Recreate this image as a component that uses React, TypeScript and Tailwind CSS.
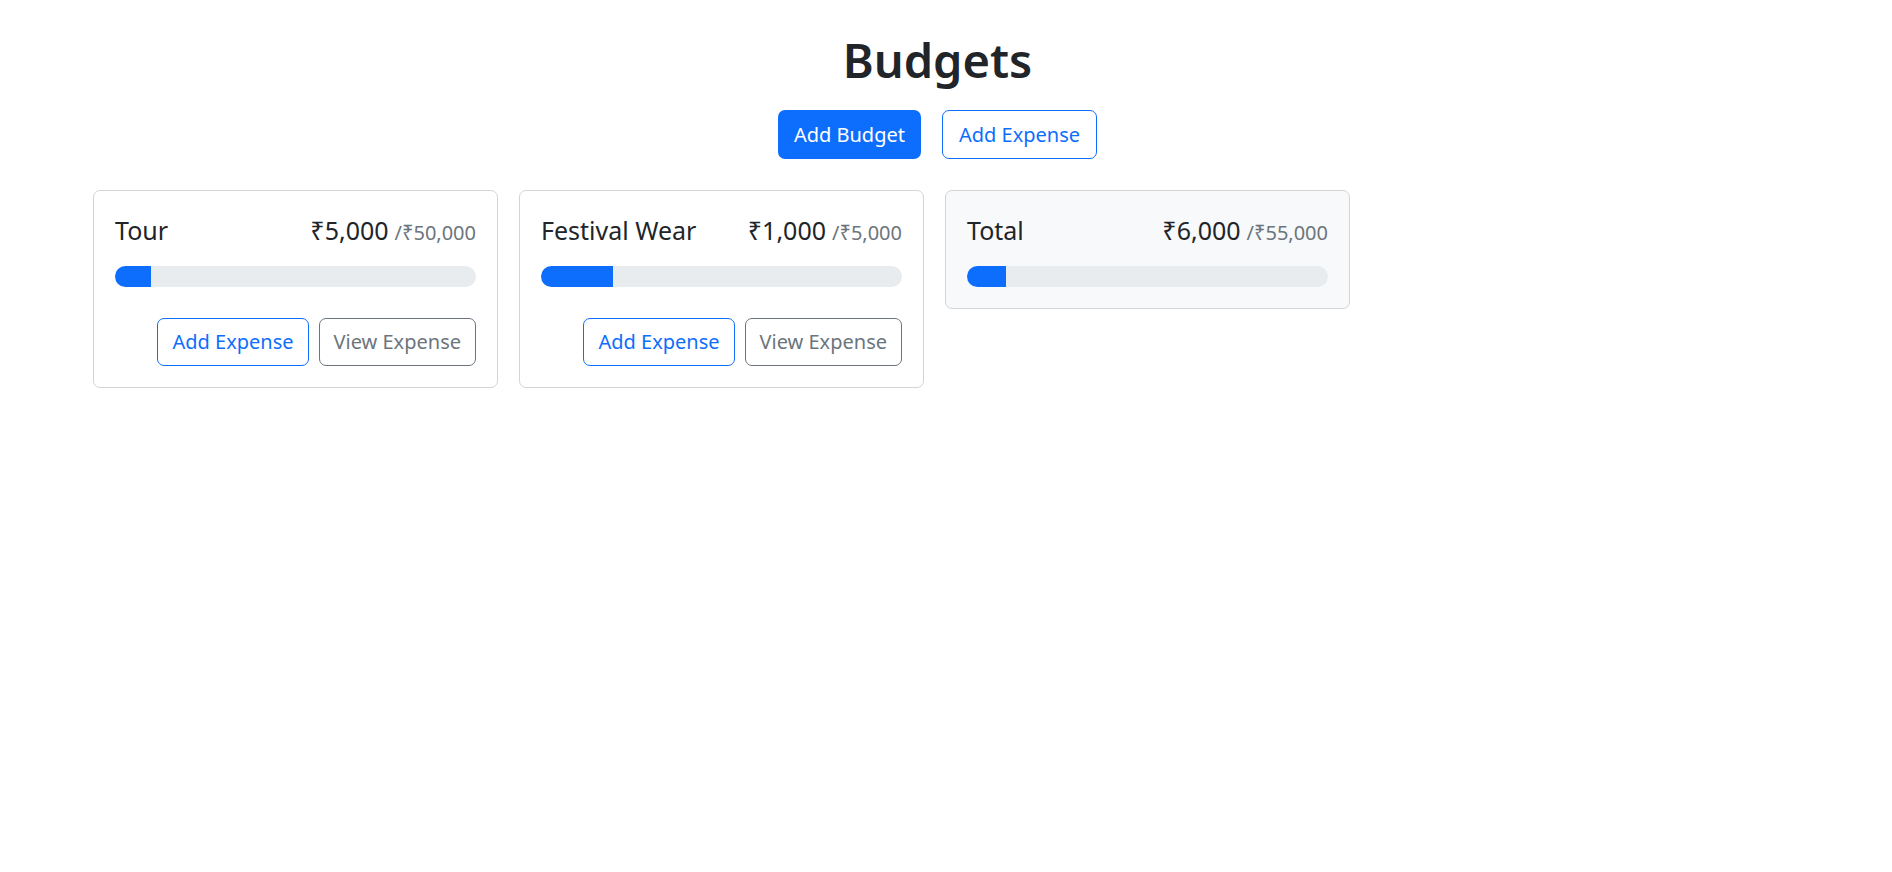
import React from 'react';

type Budget = { id: string; name: string; spent: number; max: number };

const budgets: Budget[] = [
  { id: 'tour', name: 'Tour', spent: 5000, max: 50000 },
  { id: 'fest', name: 'Festival Wear', spent: 1000, max: 5000 },
];

const fmt = (n: number) => '₹' + n.toLocaleString('en-IN');

const BudgetCard: React.FC<{ name: string; spent: number; max: number; gray?: boolean; hideButtons?: boolean }> = ({
  name,
  spent,
  max,
  gray,
  hideButtons,
}) => {
  const pct = Math.min(100, (spent / max) * 100);
  return (
    <div
      className={`rounded-[7px] border border-[#d3d4d5] px-[21px] pt-[21px] pb-[21px] ${gray ? 'bg-[#f8f9fa]' : 'bg-white'}`}
    >
      <div className="flex items-baseline justify-between mb-[15px] text-[25px] leading-[37px] text-[#212529]">
        <div>{name}</div>
        <div className="flex items-baseline">
          {fmt(spent)}
          <span className="ml-[6px] text-[20px] text-[#6c757d]">/{fmt(max)}</span>
        </div>
      </div>
      <div className="h-[21px] w-full rounded-full bg-[#e9ecef] overflow-hidden flex">
        <div className="h-full bg-[#0d6efd]" style={{ width: `${pct}%` }} />
      </div>
      {!hideButtons && (
        <div className="mt-[31px] flex justify-end gap-[10px]">
          <button className="h-[48px] px-[14px] rounded-[7px] border border-[#0d6efd] text-[#0d6efd] text-[20px] bg-white">
            Add Expense
          </button>
          <button className="h-[48px] px-[14px] rounded-[7px] border border-[#6c757d] text-[#6c757d] text-[20px] bg-white">
            View Expense
          </button>
        </div>
      )}
    </div>
  );
};

export default function App() {
  const totalSpent = budgets.reduce((s, b) => s + b.spent, 0);
  const totalMax = budgets.reduce((s, b) => s + b.max, 0);
  return (
    <div className="min-h-screen bg-white pt-[30px] font-['Noto_Sans',sans-serif] text-[#212529]">
      <div className="w-[1875px]">
        <h1 className="text-center text-[47px] leading-[60px] font-semibold">Budgets</h1>
        <div className="mt-[20px] flex justify-center gap-[21px]">
          <button className="h-[49px] px-[16px] rounded-[7px] bg-[#0d6efd] text-white text-[20px]">Add Budget</button>
          <button className="h-[49px] px-[16px] rounded-[7px] border border-[#0d6efd] text-[#0d6efd] text-[20px] bg-white">
            Add Expense
          </button>
        </div>
      </div>
      <div className="mt-[31px] pl-[93px] grid grid-cols-[repeat(4,405px)] gap-[21px] items-start">
        {budgets.map((b) => (
          <BudgetCard key={b.id} name={b.name} spent={b.spent} max={b.max} />
        ))}
        <BudgetCard name="Total" spent={totalSpent} max={totalMax} gray hideButtons />
      </div>
    </div>
  );
}
